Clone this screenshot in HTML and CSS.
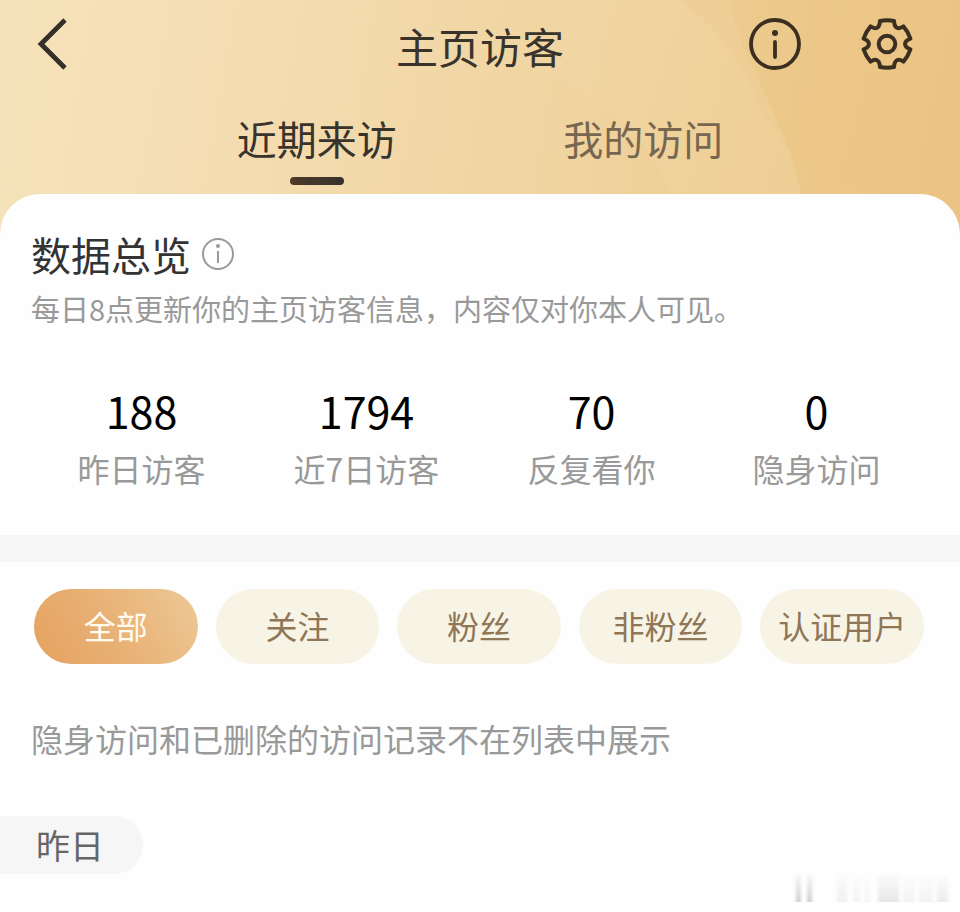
FILE: index.html
```html
<!DOCTYPE html>
<html lang="zh-CN">
<head>
<meta charset="utf-8">
<meta name="viewport" content="width=device-width, initial-scale=1">
<title>主页访客</title>
<link rel="stylesheet" href="styles.css">
</head>
<body>
<header class="hero">
  <svg class="hero-art" viewBox="0 0 960 240" preserveAspectRatio="none" aria-hidden="true">
    <defs>
      <linearGradient id="band" x1="0" y1="0" x2="1" y2="0">
        <stop offset="0" stop-color="#f5dcae" stop-opacity="0"/>
        <stop offset="1" stop-color="#f5dcae" stop-opacity=".35"/>
      </linearGradient>
      <linearGradient id="fold" x1="0" y1="0" x2="1" y2="0">
        <stop offset="0" stop-color="#e9c07c" stop-opacity="0"/>
        <stop offset="1" stop-color="#e9c07c" stop-opacity=".12"/>
      </linearGradient>
      <linearGradient id="shade" x1="0" y1="0" x2="1" y2="0">
        <stop offset="0" stop-color="#e9c07c" stop-opacity=".2"/>
        <stop offset="1" stop-color="#e9c07c" stop-opacity="0"/>
      </linearGradient>
    </defs>
    <path d="M480 0H731C738 60 780 110 800 194V240H480Z" fill="url(#band)"/>
    <path d="M480 50Q630 90 668 194V240H480Z" fill="url(#fold)"/>
    <path d="M680 0Q728 36 752 90Q776 152 830 194H960V0Z" fill="url(#shade)"/>
  </svg>
  <div class="topbar">
    <button class="icon-btn back" type="button" aria-label="返回">
      <svg width="32" height="52" viewBox="0 0 32 52"><path d="M30 2L6 26L30 50" fill="none" stroke="#36302a" stroke-width="4.800"/></svg>
    </button>
    <h1 class="title">主页访客</h1>
    <div class="actions">
      <button class="icon-btn" type="button" aria-label="说明">
        <svg width="52" height="52" viewBox="0 0 52 52"><circle cx="26" cy="26" r="24" fill="none" stroke="#3a2f20" stroke-width="3.800"/><circle cx="26" cy="15" r="3" fill="#3a2f20"/><path d="M26 24V39" stroke="#3a2f20" stroke-width="3.800" stroke-linecap="round"/></svg>
      </button>
      <button class="icon-btn" type="button" aria-label="设置">
        <svg width="52" height="52" viewBox="-26 -26 52 52"><g fill="none" stroke="#3a2f20" stroke-width="4" stroke-linejoin="round"><path d="M-7 -23Q0 -24.500 7 -23C7.500 -15.500 11.300 -14.300 16.400 -17.600Q21.200 -12.200 23.400 -5.400C16.300 -2.600 16.300 2.600 23.400 5.400Q21.200 12.200 16.400 17.600C11.300 14.300 7.500 15.500 7 23Q0 24.500 -7 23C-7.500 15.500 -11.300 14.300 -16.400 17.600Q-21.200 12.200 -23.400 5.400C-16.300 2.600 -16.300 -2.600 -23.400 -5.400Q-21.200 -12.200 -16.400 -17.600C-11.300 -14.300 -7.500 -15.500 -7 -23Z"/><circle r="8.300"/></g></svg>
      </button>
    </div>
  </div>
  <nav class="tabs" role="tablist">
    <button class="tab active" type="button" role="tab" aria-selected="true">近期来访</button>
    <button class="tab" type="button" role="tab" aria-selected="false">我的访问</button>
  </nav>
</header>

<main class="sheet">
  <section class="overview">
    <div class="overview-head">
      <h2>数据总览</h2>
      <button class="icon-btn" type="button" aria-label="数据说明">
        <svg width="32" height="32" viewBox="0 0 32 32"><circle cx="16" cy="16" r="15" fill="none" stroke="#999" stroke-width="2"/><circle cx="16" cy="8" r="2" fill="#999"/><path d="M16 13V25" stroke="#999" stroke-width="2"/></svg>
      </button>
    </div>
    <p class="desc">每日8点更新你的主页访客信息，内容仅对你本人可见。</p>
    <dl class="stats">
      <div><dt>昨日访客</dt><dd>188</dd></div>
      <div><dt>近7日访客</dt><dd>1794</dd></div>
      <div><dt>反复看你</dt><dd>70</dd></div>
      <div><dt>隐身访问</dt><dd>0</dd></div>
    </dl>
  </section>

  <section class="visitors">
    <div class="filters">
      <button class="pill selected" type="button">全部</button>
      <button class="pill" type="button">关注</button>
      <button class="pill" type="button">粉丝</button>
      <button class="pill" type="button">非粉丝</button>
      <button class="pill" type="button">认证用户</button>
    </div>
    <p class="note">隐身访问和已删除的访问记录不在列表中展示</p>
    <h3 class="day">昨日</h3>
  </section>
</main>

<svg class="mark" width="170" height="42" viewBox="0 0 170 42" aria-hidden="true">
  <defs>
    <linearGradient id="fade" x1="0" y1="0" x2="0" y2="1">
      <stop offset="0" stop-color="#888" stop-opacity=".1"/>
      <stop offset="1" stop-color="#888" stop-opacity=".8"/>
    </linearGradient>
    <filter id="soft"><feGaussianBlur stdDeviation="1.800 0.600"/></filter>
  </defs>
  <g fill="url(#fade)" filter="url(#soft)">
    <rect x="14" y="4" width="5" height="28" opacity=".5"/>
    <rect x="25" y="4" width="5" height="28" opacity=".5"/>
    <rect x="55" y="4" width="10" height="28" opacity=".15"/>
    <rect x="71" y="4" width="7" height="28" opacity=".12"/>
    <rect x="82" y="4" width="6" height="28" opacity=".1"/>
    <rect x="96" y="4" width="21" height="28" opacity=".24"/>
    <rect x="121" y="4" width="12" height="28" opacity=".12"/>
    <rect x="137" y="4" width="14" height="28" opacity=".12"/>
    <rect x="155" y="6" width="11" height="26" opacity=".2"/>
  </g>
</svg>
</body>
</html>
```
FILE: styles.css
```css
* {
  box-sizing: border-box;
}

body {
  position: relative;
  min-height: 100vh;
  margin: 0;
  background: #fefefe;
  color: #333;
  font-family: "Noto Sans CJK SC", sans-serif;
}

h1, h2, h3, p, dl, dd {
  margin: 0;
  font-weight: 400;
}

button {
  padding: 0;
  border: 0;
  background: none;
  color: inherit;
  font: inherit;
  cursor: pointer;
}

svg {
  display: block;
}

.hero {
  position: relative;
  padding-bottom: 48px;
  background: linear-gradient(100deg, #f6e3bb 0%, #f4dcb0 28%, #f0d4a0 60%, #ecc88a 82%, #eac382 100%);
}

.hero-art {
  position: absolute;
  inset: 0;
  width: 100%;
  height: 100%;
}

.topbar {
  position: relative;
  display: grid;
  grid-template-columns: 1fr auto 1fr;
  align-items: center;
  height: 88px;
  padding: 0 47px;
}

.back {
  justify-self: start;
  margin-left: -12px;
}

.title {
  padding-top: 4px;
  color: #38332b;
  font-size: 42px;
  line-height: 60px;
}

.actions {
  display: flex;
  justify-content: flex-end;
  gap: 60px;
}

.tabs {
  position: relative;
  display: grid;
  grid-template-columns: 1fr 1fr;
  width: 68%;
  margin: 0 auto;
  padding-top: 20px;
}

.tab {
  display: flex;
  flex-direction: column;
  align-items: center;
  gap: 9px;
  color: #776750;
  font-size: 40px;
  line-height: 60px;
}

.tab::after {
  content: "";
  width: 54px;
  height: 8px;
  border-radius: 4px;
}

.tab.active {
  color: #38332b;
}

.tab.active::after {
  background: linear-gradient(90deg, #50392a, #35322a);
}

.sheet {
  position: relative;
  margin-top: -39px;
  border-radius: 40px 40px 0 0;
  background: #fefefe;
}

.overview {
  padding-top: 32px;
  padding-bottom: 43px;
  border-bottom: 27px solid #f6f6f6;
}

.overview-head {
  display: flex;
  align-items: center;
  gap: 11px;
  padding: 0 31px;
}

.overview-head h2 {
  font-size: 40px;
  line-height: 56px;
}

.desc {
  padding: 4px 31px 0;
  color: #999;
  font-size: 29px;
  line-height: 44px;
}

.stats {
  display: grid;
  grid-template-columns: repeat(4, 1fr);
  padding: 50px 31px 0 29px;
  text-align: center;
}

.stats div {
  display: flex;
  flex-direction: column-reverse;
}

.stats dt {
  padding-top: 4px;
  color: #999;
  font-size: 32px;
  line-height: 48px;
}

.stats dd {
  color: #000;
  font-size: 43px;
  line-height: 60px;
}

.filters {
  display: grid;
  grid-template-columns: repeat(5, 1fr);
  gap: 18px;
  padding: 27px 36px 0 34px;
}

.pill {
  height: 75px;
  padding-bottom: 3px;
  border-radius: 38px;
  background: #f7f4e6;
  color: #8f7656;
  font-size: 32px;
  white-space: nowrap;
}

.pill.selected {
  background: linear-gradient(60deg, #e5a260 0%, #e8b074 45%, #edc996 100%);
  color: #fffbee;
}

.note {
  padding: 50px 31px 0;
  color: #999;
  font-size: 32px;
  line-height: 48px;
}

.day {
  width: max-content;
  margin-top: 54px;
  padding: 0 39px 0 36px;
  border-radius: 0 30px 30px 0;
  background: #f6f6f6;
  color: #666;
  font-size: 34px;
  line-height: 58px;
}

.mark {
  position: absolute;
  right: 8px;
  bottom: 0;
}
```
